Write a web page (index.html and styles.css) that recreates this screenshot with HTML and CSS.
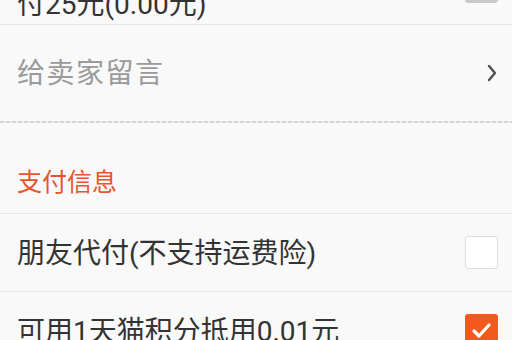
FILE: index.html
```html
<!DOCTYPE html>
<html lang="zh-CN">
<head>
    <meta charset="UTF-8">
    <meta name="viewport" content="width=device-width, initial-scale=1.0">
    <title>确认订单</title>
    <link rel="stylesheet" href="styles.css">
</head>
<body>
    <div class="order">
        <div class="row row-first">
            <span class="label">付25元(0.00元)</span>
            <span class="check check-off check-top"></span>
        </div>

        <div class="row row-link">
            <span class="label label-muted">给卖家留言</span>
            <svg class="chevron" width="10" height="18" viewBox="0 0 10 18">
                <polyline points="2,2 8,9 2,16" fill="none" stroke="#505050" stroke-width="2.4" stroke-linecap="round" stroke-linejoin="round"/>
            </svg>
        </div>

        <div class="dash"></div>

        <div class="section-title">支付信息</div>

        <div class="row">
            <span class="label">朋友代付(不支持运费险)</span>
            <span class="check check-off"></span>
        </div>

        <div class="row">
            <span class="label">可用1天猫积分抵用0.01元</span>
            <span class="check check-on">
                <svg width="33" height="33" viewBox="0 0 33 33">
                    <polyline points="9,17 14,22 24,11" fill="none" stroke="#fff" stroke-width="3.2" stroke-linecap="round" stroke-linejoin="round"/>
                </svg>
            </span>
        </div>
    </div>
</body>
</html>
```

FILE: styles.css
```css
body {
    margin: 0;
    background-color: #f9f9f9;
    font-family: Roboto, "Noto Sans CJK SC", sans-serif;
    overflow: hidden;
}

.order {
    width: 512px;
}

.row {
    display: flex;
    align-items: center;
    justify-content: space-between;
    height: 77px;
    padding: 0 14px 0 17px;
    border-bottom: 1px solid #e6e6e6;
}

.row:last-child {
    border-bottom: none;
}

.row-first {
    height: 24px;
    align-items: flex-end;
    overflow: hidden;
}

.row-first .label {
    padding-bottom: 5px;
}

.row-link {
    height: 96px;
    border-bottom: none;
    padding-right: 15px;
}

.label {
    padding-top: 3px;
    font-size: 28px;
    line-height: 28px;
    color: #333;
    white-space: nowrap;
}

.label-muted {
    padding-top: 2px;
    color: #9a9a9a;
    letter-spacing: 1.5px;
}

.check {
    width: 31px;
    height: 31px;
    border-radius: 3px;
    flex-shrink: 0;
}

.check-off {
    background: #fff;
    border: 1px solid #dcdcdc;
}

.check-top {
    background: #c9c9c9;
    border-color: #c9c9c9;
    margin-bottom: 21px;
}

.check-on {
    width: 33px;
    height: 33px;
    background: #f25a1c;
    margin-left: 2px;
}

.check-on svg {
    display: block;
}

.dash {
    height: 2px;
    background: repeating-linear-gradient(90deg, #d4d4d4 0 4px, #eeeeee 4px 6px);
}

.section-title {
    padding: 46px 17px 16px;
    font-size: 25px;
    line-height: 28px;
    color: #e6562b;
    border-bottom: 1px solid #e6e6e6;
}
```
